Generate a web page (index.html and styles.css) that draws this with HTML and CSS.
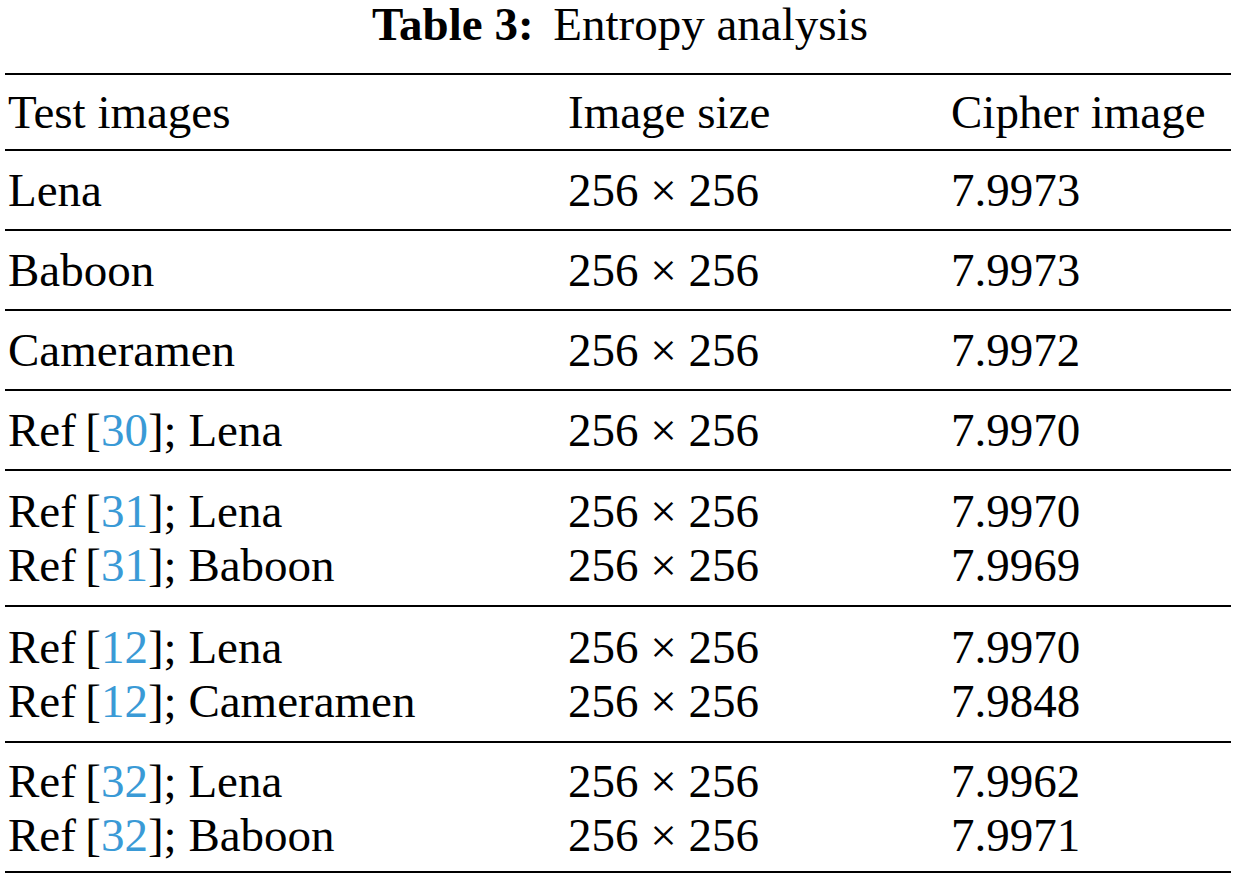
FILE: index.html
```html
<!DOCTYPE html>
<html lang="en">
<head>
<meta charset="utf-8">
<title>Table 3: Entropy analysis</title>
<link rel="stylesheet" href="styles.css">
</head>
<body>
<table class="entropy">
  <caption class="caption"><span class="caption-label">Table 3:</span> <span class="caption-text">Entropy analysis</span></caption>
  <colgroup>
    <col class="col-test">
    <col class="col-size">
    <col class="col-cipher">
  </colgroup>
  <thead>
    <tr>
      <th>Test images</th>
      <th>Image size</th>
      <th>Cipher image</th>
    </tr>
  </thead>
  <tbody>
    <tr><td>Lena</td><td>256 × 256</td><td>7.9973</td></tr>
  </tbody>
  <tbody>
    <tr><td>Baboon</td><td>256 × 256</td><td>7.9973</td></tr>
  </tbody>
  <tbody>
    <tr><td>Cameramen</td><td>256 × 256</td><td>7.9972</td></tr>
  </tbody>
  <tbody>
    <tr><td>Ref&#8201;[<a class="ref" href="#ref30">30</a>]; Lena</td><td>256 × 256</td><td>7.9970</td></tr>
  </tbody>
  <tbody class="group">
    <tr><td>Ref&#8201;[<a class="ref" href="#ref31">31</a>]; Lena</td><td>256 × 256</td><td>7.9970</td></tr>
    <tr><td>Ref&#8201;[<a class="ref" href="#ref31">31</a>]; Baboon</td><td>256 × 256</td><td>7.9969</td></tr>
  </tbody>
  <tbody class="group">
    <tr><td>Ref&#8201;[<a class="ref" href="#ref12">12</a>]; Lena</td><td>256 × 256</td><td>7.9970</td></tr>
    <tr><td>Ref&#8201;[<a class="ref" href="#ref12">12</a>]; Cameramen</td><td>256 × 256</td><td>7.9848</td></tr>
  </tbody>
  <tbody class="group-last">
    <tr><td>Ref&#8201;[<a class="ref" href="#ref32">32</a>]; Lena</td><td>256 × 256</td><td>7.9962</td></tr>
    <tr><td>Ref&#8201;[<a class="ref" href="#ref32">32</a>]; Baboon</td><td>256 × 256</td><td>7.9971</td></tr>
  </tbody>
</table>
</body>
</html>
```

FILE: styles.css
```css
html, body {
  margin: 0;
  padding: 0;
  background: #ffffff;
}

body {
  font-family: "Liberation Serif", "Times New Roman", serif;
  font-size: 47px;
  color: #000000;
}

.entropy {
  margin-left: 5px;
  width: 1226px;
  border-collapse: collapse;
  table-layout: fixed;
  border-bottom: 2px solid #000;
}

.caption {
  caption-side: top;
  text-align: center;
  line-height: 48px;
  padding-bottom: 25px;
  padding-left: 4px;
}

.caption-label {
  font-weight: bold;
  margin-right: 8px;
}

.col-test { width: 560px; }
.col-size { width: 383px; }
.col-cipher { width: 283px; }

.entropy th,
.entropy td {
  text-align: left;
  font-weight: normal;
  line-height: 54px;
  padding: 0 0 0 3px;
  white-space: nowrap;
  vertical-align: top;
}

.entropy thead tr {
  border-top: 2px solid #000;
}

.entropy thead th {
  padding-top: 10px;
  padding-bottom: 10px;
}

.entropy tbody {
  border-top: 2px solid #000;
}

.entropy tbody tr:first-child td {
  padding-top: 12px;
}

.entropy tbody tr:last-child td {
  padding-bottom: 12px;
}

.entropy tbody.group tr:first-child td {
  padding-top: 13px;
}

.entropy tbody.group tr:last-child td {
  padding-bottom: 13px;
}

.entropy tbody.group-last tr:first-child td {
  padding-top: 11px;
}

.entropy tbody.group-last tr:last-child td {
  padding-bottom: 9px;
}

.ref {
  color: #3a9ad6;
  text-decoration: none;
}
```
